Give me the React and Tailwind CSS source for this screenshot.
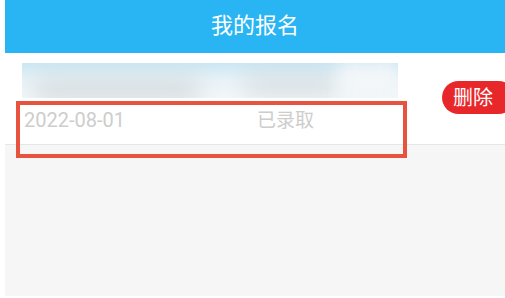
import React from 'react';

const App = () => {
  return (
    <div
      className="w-[505px] h-[298px] bg-white pl-[5px] pb-[2px] overflow-hidden"
      style={{ fontFamily: 'Roboto, "Noto Sans CJK SC", sans-serif' }}
    >
      <div className="flex flex-col h-full bg-[#f6f6f7]">
        {/* header */}
        <div className="h-[53px] bg-[#29b5f4] flex items-center justify-center">
          <span className="text-white text-[22px] leading-none -mt-[2px]">我的报名</span>
        </div>

        {/* list item */}
        <div className="relative h-[92px] bg-white border-b border-[#e6e6e6] flex items-start overflow-hidden">
          <div className="flex-1 flex flex-col">
            {/* blurred title */}
            <div className="ml-[17px] mt-[10px] w-[376px] h-[35px] relative overflow-hidden bg-linear-to-b from-[#cbe7f4] via-[#e9f3f7] to-[#f4f7f9]">
              <div className="absolute left-[10px] top-[16px] w-[170px] h-[24px] rounded-full bg-[#c3cbd0] blur-[12px] opacity-60" />
              <div className="absolute left-[220px] top-[12px] w-[100px] h-[22px] rounded-full bg-[#c6cdd1] blur-[12px] opacity-55" />
              <div className="absolute right-0 top-0 w-[60px] h-full bg-[#f2f6f8] blur-[8px]" />
            </div>
            <div className="flex items-center mt-[12px] ml-[19px] text-[#cdcdcd] text-[20px] leading-none">
              <span className="w-[233px]">2022-08-01</span>
              <span className="text-[19px]">已录取</span>
            </div>
          </div>
          <div className="mt-[28px] mr-[-10px] h-[33px] w-[73px] rounded-full bg-[#e8272b] flex items-center pl-[11px]">
            <span className="text-white text-[20px] leading-none">删除</span>
          </div>
        </div>

        <div className="flex-1" />
      </div>

      {/* annotation box */}
      <div className="absolute left-[16px] top-[101px] w-[391px] h-[57px] border-[4px] border-[#e8533f] pointer-events-none" />
    </div>
  );
};

export default App;
